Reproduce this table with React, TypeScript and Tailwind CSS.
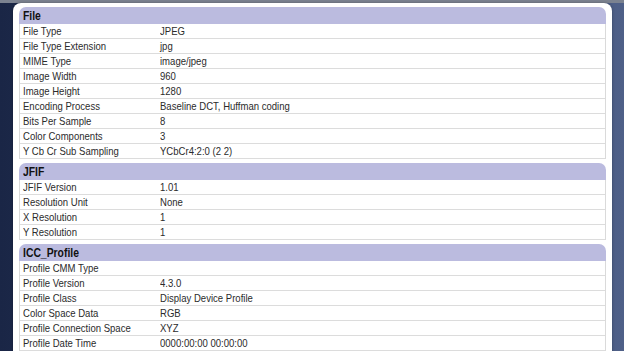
const sections: { title: string; rows: [string, string][] }[] = [
  {
    title: "File",
    rows: [
      ["File Type", "JPEG"],
      ["File Type Extension", "jpg"],
      ["MIME Type", "image/jpeg"],
      ["Image Width", "960"],
      ["Image Height", "1280"],
      ["Encoding Process", "Baseline DCT, Huffman coding"],
      ["Bits Per Sample", "8"],
      ["Color Components", "3"],
      ["Y Cb Cr Sub Sampling", "YCbCr4:2:0 (2 2)"],
    ],
  },
  {
    title: "JFIF",
    rows: [
      ["JFIF Version", "1.01"],
      ["Resolution Unit", "None"],
      ["X Resolution", "1"],
      ["Y Resolution", "1"],
    ],
  },
  {
    title: "ICC_Profile",
    rows: [
      ["Profile CMM Type", ""],
      ["Profile Version", "4.3.0"],
      ["Profile Class", "Display Device Profile"],
      ["Color Space Data", "RGB"],
      ["Profile Connection Space", "XYZ"],
      ["Profile Date Time", "0000:00:00 00:00:00"],
    ],
  },
];

// the capture is squeezed a little horizontally, so the text is too
const squeeze = "inline-block origin-left scale-x-[0.83] whitespace-nowrap";

export default function App() {
  return (
    <div className="h-[351px] w-[624px] overflow-hidden bg-gradient-to-r from-[#1a2646] via-[#2f3d62] to-[#4f6088] font-['Liberation_Sans',Arial,sans-serif]">
      <div className="h-[3px] bg-[#7b8290]" />
      <div className="ml-[13px] w-[599px] rounded-[8px] bg-white px-[6px] pt-[4px] pb-4 shadow-[0_0_3px_rgba(0,0,0,0.3)]">
        {sections.map((s) => (
          <div key={s.title} className="mb-[4px]">
            <div className="flex h-[17px] items-center rounded-t-[7px] bg-[#bbbbdf] px-[4px] pt-px text-[12.5px] font-bold text-[#111]">
              <span className={squeeze}>{s.title}</span>
            </div>
            <div className="border-x border-[#dadada]">
              {s.rows.map(([k, v]) => (
                <div
                  key={k}
                  className="flex h-[15px] items-center border-b border-[#dcdcdc] px-[3px] pt-px text-[11.5px] leading-none text-[#2b2b2b]"
                >
                  <span className="w-[137px] shrink-0">
                    <span className={squeeze}>{k}</span>
                  </span>
                  <span className={squeeze}>{v}</span>
                </div>
              ))}
            </div>
          </div>
        ))}
      </div>
    </div>
  );
}
